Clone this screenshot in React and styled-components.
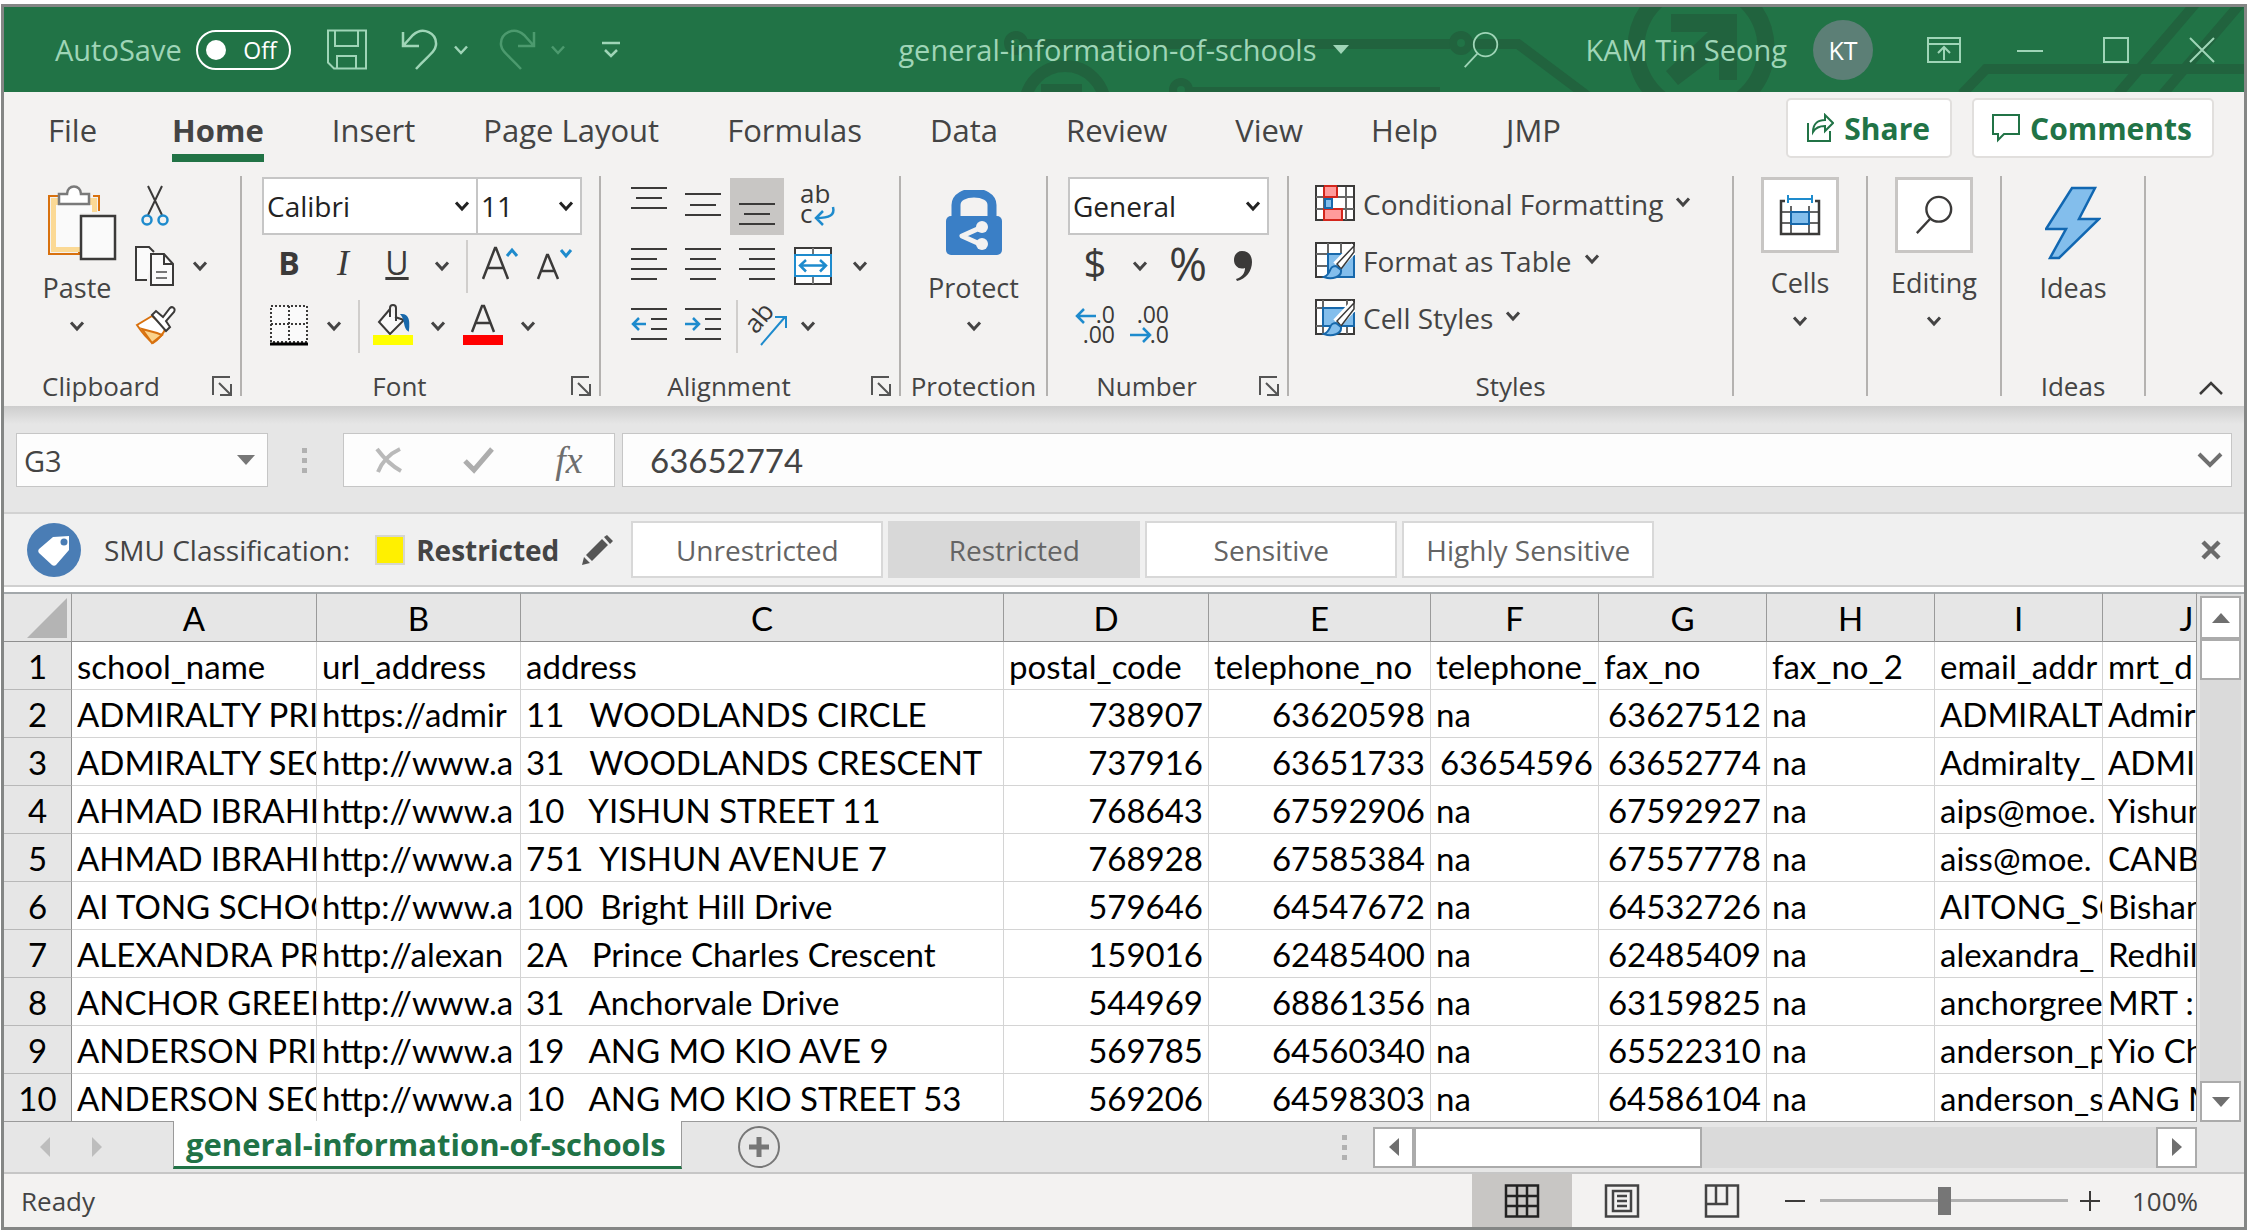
import React from "react";
import styled, { createGlobalStyle, css } from "styled-components";

const ui = `"Open Sans", "Noto Sans", sans-serif`;
const sheetFont = `Lato, "Open Sans", sans-serif`;
const green = "#217346";
const mint = "#9fd5b7";
const ink = "#3b3a39";
const blue = "#1e8bcd";

const Global = createGlobalStyle`
  * { box-sizing: border-box; }
  body { margin: 0; background: #fff; font-family: ${ui}; color: #444; }
  button, input, select { font: inherit; color: inherit; margin: 0; }
`;

const Window = styled.div`
  margin: 4px 3px 3px 1px;
  border: 3px solid #848685;
  background: #f3f2f1;
  overflow: hidden;
`;

const Plain = styled.button`
  display: flex;
  align-items: center;
  justify-content: center;
  flex: none;
  border: 0;
  padding: 0;
  background: none;
`;

/* ---------- Title bar ---------- */
const TitleBar = styled.header`
  position: relative;
  display: flex;
  align-items: center;
  height: 85px;
  padding: 0 28px 0 51px;
  background: ${green};
  color: ${mint};
  font-size: 29px;
  line-height: 40px;
  white-space: nowrap;
`;
const Circuit = styled.svg`
  position: absolute;
  top: 0;
  right: 0;
`;
const Cluster = styled.div`
  position: relative;
  display: flex;
  align-items: center;
  gap: ${(p) => p.$gap || 0}px;
  margin-left: ${(p) => p.$left || 0};
`;
const AutoSave = styled.label`
  display: flex;
  align-items: center;
  gap: 14px;
  margin-right: 35px;
`;
const Toggle = styled.button`
  display: flex;
  align-items: center;
  justify-content: space-between;
  width: 95px;
  height: 40px;
  padding: 0 12px 0 8px;
  border: 2px solid #fff;
  border-radius: 20px;
  background: none;
  color: #fff;
  font-size: 23px;
  line-height: 30px;
`;
const Knob = styled.span`
  width: 20px;
  height: 20px;
  border-radius: 50%;
  background: #fff;
`;
const TitleName = styled(Plain)`
  gap: 16px;
`;
const Avatar = styled(Plain)`
  width: 60px;
  height: 60px;
  border-radius: 50%;
  background: #5c7f76;
  color: #fff;
  font-size: 25px;
  margin: 0 54px 0 26px;
`;
const QuickButton = styled(Plain)`
  margin-right: ${(p) => p.$after || 0}px;
`;

/* ---------- Tabs ---------- */
const TabRow = styled.nav`
  display: flex;
  align-items: center;
  height: 72px;
  padding: 0 30px 0 44px;
  font-size: 31px;
`;
const Tab = styled.button`
  height: 72px;
  border: 0;
  padding: 4px 0 0;
  margin-right: ${(p) => (p.$first ? 75 : 68)}px;
  background: ${(p) => (p.$active ? `linear-gradient(${green}, ${green}) 0 62px / 100% 8px no-repeat` : "none")};
  font-weight: ${(p) => (p.$active ? 700 : 400)};
  line-height: 68px;
  white-space: nowrap;
`;
const TabActions = styled.div`
  display: flex;
  gap: 20px;
  margin-left: auto;
`;
const ActionButton = styled.button`
  display: flex;
  align-items: center;
  gap: 10px;
  height: 60px;
  padding: 0 20px 0 18px;
  border: 2px solid #e1dfdd;
  border-radius: 5px;
  background: #fff;
  color: ${green};
  font-weight: 700;
  font-size: 30px;
`;

/* ---------- Ribbon ---------- */
const Ribbon = styled.section`
  display: flex;
  height: 242px;
  padding: 12px 0 10px;
  font-size: 27px;
`;
const Group = styled.div`
  display: flex;
  flex-direction: column;
  flex: none;
  width: ${(p) => p.$w}px;
  padding: 1px 0 0 ${(p) => p.$pad || 0}px;
  border-right: 2px solid #b4b2b0;
`;
const GroupFoot = styled.div`
  display: flex;
  align-items: center;
  height: 20px;
  margin-top: auto;
  margin-left: -${(p) => p.$pad || 0}px;
  font-size: 26px;
  line-height: 20px;
`;
const GroupLabel = styled.span`
  flex: 1;
  text-align: center;
  white-space: nowrap;
`;
const Launcher = styled(Plain)`
  width: 42px;
  height: 20px;
  padding-left: 6px;
`;
const Rows = styled.div`
  display: flex;
  flex-direction: column;
  gap: 2px;
`;
const Row = styled.div`
  display: flex;
  align-items: center;
  height: 58px;
`;
const Tool = styled(Plain)`
  width: ${(p) => p.$w || 54}px;
  height: 57px;
  padding-bottom: ${(p) => (p.$raised ? 6 : 0)}px;
  font-size: ${(p) => p.$size || 32}px;
  line-height: 50px;
  color: ${ink};
  ${(p) => p.$on && css`background: #c8c6c4;`}
`;
const Bold = styled.b`
  font-weight: 700;
`;
const Italic = styled.i`
  font-family: "Liberation Serif", serif;
  font-size: 36px;
`;
const Rule = styled.span`
  flex: none;
  width: 2px;
  height: 53px;
  margin: 0 6px;
  background: #d0cecc;
`;
const Combo = styled.label`
  display: grid;
  flex: none;
  align-items: center;
  width: ${(p) => p.$w}px;
  height: 58px;
  border: 2px solid #c6c6c6;
  background: #fff;
  font-size: 28px;
  color: #222;
  & + & { margin-left: -2px; }
  > * { grid-area: 1 / 1; }
  > svg { justify-self: end; margin-right: 6px; pointer-events: none; }
`;
const ComboSelect = styled.select`
  appearance: none;
  width: 100%;
  height: 54px;
  border: 0;
  padding: 0 30px 0 3px;
  background: none;
`;
const Split = styled.div`
  display: flex;
  align-items: flex-start;
  gap: 6px;
`;
const Big = styled(Plain)`
  flex-direction: column;
  justify-content: flex-start;
  align-self: ${(p) => (p.$w ? "flex-start" : "center")};
  width: ${(p) => p.$w || "auto"};
  line-height: 38px;
`;
const BigIcon = styled.span`
  display: grid;
  place-items: center;
  height: 92px;
`;
const BoxIcon = styled.span`
  display: grid;
  place-items: center;
  width: 78px;
  height: 76px;
  margin-bottom: 11px;
  border: 3px solid #c8c6c4;
  background: #fff;
`;
const DownCell = styled.span`
  display: grid;
  place-items: center;
  height: 38px;
`;
const StyleButton = styled(Plain)`
  align-self: flex-start;
  gap: 8px;
  height: 57px;
  padding-bottom: 4px;
  font-size: 28px;
  white-space: nowrap;
  > :last-child { margin: 0 0 4px 4px; }
`;
const Collapse = styled(Plain)`
  align-self: flex-end;
  margin-left: auto;
  margin-right: 20px;
`;

/* ---------- Formula bar ---------- */
const FormulaBar = styled.section`
  display: flex;
  align-items: center;
  height: 108px;
  padding: 2px 12px 0;
  border-bottom: 2px solid #d2d2d2;
  background: linear-gradient(#cdcdcd, #e6e6e6 18px);
`;
const Field = styled.div`
  display: flex;
  align-items: center;
  width: ${(p) => p.$w || "auto"};
  flex: ${(p) => (p.$w ? "none" : 1)};
  height: 54px;
  margin-right: ${(p) => p.$after || 0}px;
  border: 1px solid #c6c6c6;
  background: #fdfdfd;
`;
const NameInput = styled.input`
  flex: 1;
  min-width: 0;
  border: 0;
  padding: 0 0 0 7px;
  background: none;
  font-size: 29px;
`;
const FormulaInput = styled(NameInput)`
  padding-left: 27px;
  font-family: ${sheetFont};
  font-size: 33px;
`;
const CaretButton = styled(Plain)`
  width: 42px;
  height: 52px;
`;
const Dots = styled.span`
  flex: none;
  width: 5px;
  height: 25px;
  margin: ${(p) => p.$margin};
  background: repeating-linear-gradient(#b1b1b1 0 5px, transparent 5px 10px);
`;
const FxButton = styled(Plain)`
  flex: 1;
  font-family: "Liberation Serif", serif;
  font-style: italic;
  font-size: 38px;
  color: #6e6e6e;
`;

/* ---------- Classification bar ---------- */
const ClassBar = styled.section`
  display: flex;
  align-items: center;
  height: 73px;
  padding: 0 22px 0 23px;
  border-bottom: 2px solid #d0d0d0;
  background: #f0f0f0;
  font-size: 28px;
  white-space: nowrap;
`;
const ClassText = styled.span`
  margin: 0 25px 0 23px;
`;
const Swatch = styled.span`
  width: 30px;
  height: 30px;
  border: 2px solid #d6d6cf;
  background: #fff000;
`;
const ClassName = styled.strong`
  margin: 0 22px 0 11px;
`;
const ClassOptions = styled.div`
  display: flex;
  gap: 5px;
  margin-left: 18px;
`;
const ClassButton = styled.button`
  width: 252px;
  height: 57px;
  padding: 0;
  border: 2px solid #d8d8d8;
  background: ${(p) => (p.$on ? "#d8d8d8" : "#fff")};
  color: #646464;
`;
const CloseButton = styled(Plain)`
  margin-left: auto;
`;

/* ---------- Grid ---------- */
const GridArea = styled.main`
  display: flex;
  padding-top: 5px;
  background: #fff;
`;
const GridView = styled.div`
  flex: 1;
  min-width: 0;
  overflow: hidden;
  height: 530px;
  border-right: 1px solid #9a9a9a;
  border-bottom: 1px solid #9a9a9a;
`;
const Sheet = styled.table`
  table-layout: fixed;
  width: 2267px;
  border-collapse: separate;
  border-spacing: 0;
  font-family: ${sheetFont};
  font-size: 33px;
  color: #000;
`;
const Col = styled.col`
  width: ${(p) => p.$w}px;
`;
const ColHead = styled.th`
  height: 50px;
  padding: 0;
  border-top: 2px solid #a3a8ab;
  border-right: 1px solid #9a9a9a;
  border-bottom: 1px solid #8f8f8f;
  background: #e6e6e6;
  font-weight: 400;
  line-height: 40px;
`;
const RowHead = styled.th`
  height: 48px;
  padding: 0;
  border-right: 1px solid #8f8f8f;
  border-bottom: 1px solid #b8b8b8;
  background: #e6e6e6;
  font-weight: 400;
  line-height: 40px;
`;
const Cell = styled.td`
  height: 48px;
  padding: 0 5px;
  border-right: 1px solid #d4d4d4;
  border-bottom: 1px solid #d4d4d4;
  overflow: hidden;
  white-space: pre;
  line-height: 40px;
  text-align: ${(p) => (p.$num ? "right" : "left")};
`;
const Corner = styled.svg`
  display: block;
  margin-left: auto;
  margin-right: 4px;
`;
const VScroll = styled.div`
  display: flex;
  flex-direction: column;
  flex: none;
  width: 47px;
  padding: 2px 3px 0;
  border-top: 2px solid #a3a8ab;
  background: linear-gradient(90deg, #e6e6e6 3px, #dadada 3px 44px, #e6e6e6 44px);
`;
const ScrollButton = styled(Plain)`
  width: 41px;
  height: ${(p) => p.$h || 41}px;
  border: 2px solid #ababab;
  background: #fff;
  ${(p) => p.$last && css`margin-${p.$last}: auto;`}
`;
const Thumb = styled.div`
  flex: none;
  width: ${(p) => p.$w || 41}px;
  height: 41px;
  border: 2px solid #ababab;
  background: #fff;
`;

/* ---------- Sheet tabs ---------- */
const SheetBar = styled.section`
  display: flex;
  height: 50px;
  padding-right: 47px;
  background: #e6e6e6;
`;
const SheetNav = styled.div`
  display: flex;
  align-items: center;
  gap: 42px;
  width: 169px;
  padding-left: 36px;
`;
const SheetTab = styled.button`
  height: 48px;
  margin-top: -1px;
  padding: 0 15px 0 12px;
  border: solid #9a9a9a;
  border-width: 0 1px;
  border-bottom: 3px solid ${green};
  background: #fff;
  color: ${green};
  font-weight: 700;
  font-size: 31px;
  line-height: 40px;
`;
const AddSheet = styled(Plain)`
  margin-left: 56px;
`;
const HScroll = styled.div`
  display: flex;
  align-self: center;
  width: 824px;
  height: 41px;
  background: #dadada;
`;

/* ---------- Status bar ---------- */
const StatusBar = styled.footer`
  display: flex;
  align-items: center;
  height: 55px;
  padding-right: 46px;
  border-top: 2px solid #c6c6c6;
  background: #f3f2f1;
  font-size: 26px;
`;
const Ready = styled.span`
  flex: 1;
  padding-left: 17px;
`;
const ViewButton = styled(Plain)`
  width: 100px;
  height: 53px;
  background: ${(p) => (p.$on ? "#c8c6c4" : "none")};
`;
const ZoomSlider = styled.input`
  appearance: none;
  width: 248px;
  height: 28px;
  margin: 0 12px;
  background: linear-gradient(#b1b1b1, #b1b1b1) center / 100% 3px no-repeat;
  &::-webkit-slider-thumb {
    appearance: none;
    width: 13px;
    height: 28px;
    background: #767676;
  }
`;
const ZoomLevel = styled.output`
  width: 98px;
  text-align: right;
`;

/* ---------- Icons ---------- */
const Svg = ({ w, h, children, sw = 2, stroke = ink, vb }) => (
  <svg width={w} height={h} viewBox={vb || `0 0 ${w} ${h}`} fill="none" stroke={stroke} strokeWidth={sw} aria-hidden="true">
    {children}
  </svg>
);
const Down = ({ color = "#444", sw = 3 }) => (
  <Svg w={16} h={12} stroke={color} sw={sw}><path d="M2 2.5l6 6.5 6-6.5" /></Svg>
);
const triangles = { down: "M1 5h18l-9 10z", up: "M1 15h18L10 5z", left: "M15 1v18L5 10z", right: "M5 1v18l10-9z" };
const Tri = ({ dir = "down", color = "#6f6f6f" }) => (
  <Svg w={20} h={20} stroke="none"><path d={triangles[dir]} fill={color} /></Svg>
);
const LaunchIcon = () => (
  <Svg w={20} h={20} stroke="#555"><path d="M1 19V1h17M7 7l11 11M19 8v11H8" /></Svg>
);
const Lines = ({ rows, children }) => (
  <Svg w={36} h={42}>
    {rows.map(([x, y, len]) => <path key={y} d={`M${x} ${y}h${len}`} />)}
    {children}
  </Svg>
);
const PasteIcon = () => (
  <Svg w={80} h={76} vb="-10 0 80 76">
    <path d="M12 11H2v58h30v-8M46 11h6v15" stroke="#d8710e" />
    <path d="M4 13h8v8h30v-8h8v14H33v40H4z" fill="#fbd995" stroke="none" />
    <path d="M9 20h36v8H33v34H9z" fill="#fafafa" stroke="none" />
    <path d="M12 9h8c0-10 14-10 14 0h8v10H12z" fill="#fff" stroke="#7a7a7a" strokeWidth="2.5" />
    <rect x="34" y="31" width="34" height="43" fill="#fafafa" strokeWidth="2.5" />
  </Svg>
);
const CutIcon = () => (
  <Svg w={28} h={42}>
    <path d="M7 1l14 29M21 1L7 30" />
    <circle cx="6" cy="35" r="4.5" stroke={blue} strokeWidth="2.5" />
    <circle cx="22" cy="35" r="4.5" stroke={blue} strokeWidth="2.5" />
  </Svg>
);
const CopyIcon = () => (
  <Svg w={42} h={42}>
    <path d="M13 35H2V2h13l5 5" fill="#fafafa" />
    <path d="M17 9h13l9 10v21H17z" fill="#fafafa" />
    <path d="M30 9v10h9" />
    <path d="M22 27h11M22 33h11" stroke="#777" />
  </Svg>
);
const BrushIcon = () => (
  <Svg w={42} h={44}>
    <path d="M18 12L3 21c4 6 9 13 16 18 6-4 10-9 13-15z" fill="#fff" stroke="#d8710e" />
    <path d="M8 25l15 4 5 2-10 8z" fill="#fbd38b" stroke="#d8710e" />
    <path d="M18 11l4-4 7 6 7-9c2-2 6 0 4 4l-8 9 4 6-4 4z" fill="#fff" />
  </Svg>
);
const BorderIcon = () => (
  <Svg w={40} h={44}>
    <rect x="2" y="2" width="36" height="36" fill="#fafafa" strokeDasharray="2 2" />
    <path d="M20 2v36M2 20h36" strokeDasharray="2 2" />
    <path d="M1 40h38" stroke="#000" strokeWidth="3" />
  </Svg>
);
const FillIcon = () => (
  <Svg w={42} h={44}>
    <path d="M18 5L7 18l11 12 14-14-9-3" fill="#fafafa" />
    <path d="M18 13V4c0-4 6-4 6 0v13" />
    <path d="M30 11c6 0 7 6 6 15-4-3-2-10-6-15z" fill="#1768ab" stroke="#1768ab" />
    <path d="M1 36h40" stroke="#ffff00" strokeWidth="10" />
  </Svg>
);
const FontColorIcon = () => (
  <Svg w={42} h={44}>
    <path d="M10 28L20 2h2l10 26M14 19h14" strokeWidth="2.5" />
    <path d="M1 36h40" stroke="#ff0000" strokeWidth="10" />
  </Svg>
);
const SizeIcon = ({ up }) => (
  <Svg w={38} h={36}>
    {up ? <path d="M1 34L13 3h1l12 31M6 23h15" strokeWidth="2.5" /> : <path d="M2 34L11 10h1l10 24M6 26h12" strokeWidth="2.5" />}
    <path d={up ? "M25 11l5-6 5 6" : "M25 5l5 6 5-6"} stroke={blue} strokeWidth="3" />
  </Svg>
);
const svgText = { fontFamily: ui, fill: ink, stroke: "none" };
const WrapIcon = () => (
  <Svg w={36} h={42}>
    <text x="0" y="18" fontSize="26" {...svgText}>ab</text>
    <text x="0" y="38" fontSize="26" {...svgText}>c</text>
    <path d="M33 22c2 8-3 11-17 11M23 26l-7 7 7 7" stroke={blue} strokeWidth="2.5" />
  </Svg>
);
const MergeIcon = () => (
  <Svg w={40} h={40}>
    <rect x="2" y="2" width="36" height="36" fill="#fff" />
    <path d="M20 2v7M20 31v7" stroke="#777" />
    <rect x="2" y="9" width="36" height="21" stroke={blue} fill="#fff" />
    <path d="M8 19.500h24M13 14l-6 5.500 6 6M27 14l6 5.500-6 6" stroke={blue} strokeWidth="2.500" />
  </Svg>
);
const OrientIcon = () => (
  <Svg w={42} h={42}>
    <text x="10" y="30" fontSize="26" transform="rotate(-50 10 30)" {...svgText}>ab</text>
    <path d="M15 40L39 12M29 12h11v11" stroke={blue} />
  </Svg>
);
const LockIcon = () => (
  <Svg w={56} h={66}>
    <path d="M10 28V15c0-16 36-16 36 0v13" stroke="#3a7fc6" strokeWidth="9" />
    <rect x="0" y="26" width="56" height="39" rx="5" fill="#3a7fc6" stroke="none" />
    <path d="M36 37L16 46l20 9" stroke="#f3f2f1" strokeWidth="5" strokeLinejoin="round" />
    <circle cx="36" cy="37" r="6" fill="#f3f2f1" stroke="none" />
    <circle cx="36" cy="54" r="6" fill="#f3f2f1" stroke="none" />
  </Svg>
);
const CommaIcon = () => (
  <Svg w={20} h={34} stroke="none">
    <path d="M9 2c6 0 10 4 10 11 0 9-6 17-15 19l-1-2c6-2 9-6 9-11-6 2-11-2-11-8 0-5 3-9 8-9z" fill={ink} />
  </Svg>
);
const DecimalIcon = ({ less }) => (
  <Svg w={40} h={42}>
    <text x="40" y="18" textAnchor="end" fontSize="23" {...svgText}>{less ? ".00" : ".0"}</text>
    <text x="40" y="38" textAnchor="end" fontSize="23" {...svgText}>{less ? ".0" : ".00"}</text>
    {less
      ? <path d="M1 30h20M14 23l7 7-7 7" stroke={blue} strokeWidth="2.500" />
      : <path d="M21 11H2M9 4l-7 7 7 7" stroke={blue} strokeWidth="2.500" />}
  </Svg>
);
const CondIcon = () => (
  <Svg w={40} h={38}>
    <rect x="1" y="1" width="38" height="34" fill="#fff" />
    <path d="M1 12h38M1 24h38M9 1v34M31 1v34" stroke="#666" />
    <path d="M9 1h13v11H9zM9 24h18v11H9z" fill="#ff9b9b" stroke="#d3261c" />
    <path d="M10 14h7v9h-7z" fill="#83beec" stroke="#1768ab" />
    <rect x="1" y="1" width="38" height="34" strokeDasharray="8 13 35 200" strokeWidth="2" />
  </Svg>
);
const BrushOver = () => (
  <>
    <path d="M40 5L22 24" stroke="#fff" strokeWidth="10" />
    <path d="M39 4L22 22l4 5L39 10z" fill="#fff" strokeWidth="1.500" />
    <path d="M21 24c-8 0-4 8-12 11 8 3 18 0 17-7z" fill="#83beec" stroke="#1768ab" />
  </>
);
const TableIcon = () => (
  <Svg w={40} h={38}>
    <rect x="1" y="1" width="38" height="34" fill="#fff" />
    <path d="M1 12h38M1 24h38M13 1v34M26 1v34" stroke="#666" />
    <path d="M13 12h26v23H13z" fill="#83beec" stroke="#1768ab" />
    <BrushOver />
  </Svg>
);
const CellStyleIcon = () => (
  <Svg w={40} h={38}>
    <rect x="1" y="1" width="38" height="34" fill="#fff" />
    <path d="M1 9h38M1 27h38M8 1v34M32 1v34" stroke="#666" />
    <path d="M8 9h31v18H8z" fill="#83beec" stroke="#1768ab" />
    <BrushOver />
  </Svg>
);
const CellsIcon = () => (
  <Svg w={42} h={42}>
    <path d="M2 18h38M2 29h38M12 12v28M30 12v28" stroke="#666" />
    <path d="M6 7H2v33h38V7h-4" strokeWidth="2.500" />
    <rect x="12" y="18" width="18" height="12" fill="#83beec" stroke="#1768ab" />
    <path d="M9 1v8M33 1v8M9 5h24" stroke={blue} />
  </Svg>
);
const GlassIcon = ({ color = ink, sw = 2.5, w = 40 }) => (
  <Svg w={w} h={w} vb="0 0 40 42" stroke={color} sw={sw}>
    <circle cx="25" cy="15" r="13" /><path d="M16 25L2 40" />
  </Svg>
);
const BoltIcon = () => (
  <Svg w={56} h={74}>
    <path d="M27 2h23L34 33h20L14 72H5l16-29H1z" fill="#83beec" stroke="#1167b1" strokeWidth="2.500" />
  </Svg>
);
const PageIcon = ({ kind }) => (
  <Svg w={36} h={34} stroke="#444" sw={2.500}>
    {kind === "normal" && <path d="M2 1.500h32v31H2zM2 12h32M2 22h32M13 1v32M23 1v32" stroke="#222" />}
    {kind === "layout" && <path d="M2 1.500h32v31H2zM9 7h18v20H9zM13 12h10M13 17h10M13 22h10" />}
    {kind === "break" && <path d="M2 1.500h32v31H2zM2 20h21V1M12 1v19" />}
  </Svg>
);

/* ---------- Data ---------- */
const columns = [
  ["A", 245], ["B", 204], ["C", 483], ["D", 205], ["E", 222],
  ["F", 168], ["G", 168], ["H", 168], ["I", 168], ["J", 168],
];
const rows = [
  ["school_name", "url_address", "address", "postal_code", "telephone_no", "telephone_", "fax_no", "fax_no_2", "email_addr", "mrt_d"],
  ["ADMIRALTY PRI", "https://admir", "11   WOODLANDS CIRCLE", 738907, 63620598, "na", 63627512, "na", "ADMIRALTY", "Admira"],
  ["ADMIRALTY SEC", "http://www.a", "31   WOODLANDS CRESCENT", 737916, 63651733, 63654596, 63652774, "na", "Admiralty_", "ADMI"],
  ["AHMAD IBRAHIM", "http://www.a", "10   YISHUN STREET 11", 768643, 67592906, "na", 67592927, "na", "aips@moe.", "Yishun"],
  ["AHMAD IBRAHIM", "http://www.a", "751  YISHUN AVENUE 7", 768928, 67585384, "na", 67557778, "na", "aiss@moe.", "CANB"],
  ["AI TONG SCHOOL", "http://www.a", "100  Bright Hill Drive", 579646, 64547672, "na", 64532726, "na", "AITONG_SC", "Bishan"],
  ["ALEXANDRA PRI", "http://alexan", "2A   Prince Charles Crescent", 159016, 62485400, "na", 62485409, "na", "alexandra_", "Redhill"],
  ["ANCHOR GREEN", "http://www.a", "31   Anchorvale Drive", 544969, 68861356, "na", 63159825, "na", "anchorgree", "MRT :"],
  ["ANDERSON PRIM", "http://www.a", "19   ANG MO KIO AVE 9", 569785, 64560340, "na", 65522310, "na", "anderson_p", "Yio Ch"],
  ["ANDERSON SECO", "http://www.a", "10   ANG MO KIO STREET 53", 569206, 64598303, "na", 64586104, "na", "anderson_s", "ANG M"],
];
const tabs = ["File", "Home", "Insert", "Page Layout", "Formulas", "Data", "Review", "View", "Help", "JMP"];
const levels = ["Unrestricted", "Restricted", "Sensitive", "Highly Sensitive"];

const Foot = ({ label, pad, launch }) => (
  <GroupFoot $pad={pad}>
    <GroupLabel>{label}</GroupLabel>
    {launch && <Launcher aria-label={`${label} settings`}><LaunchIcon /></Launcher>}
  </GroupFoot>
);
const More = ({ label }) => <Tool $w={36} aria-label={label}><Down /></Tool>;
const Choice = ({ label, w, value }) => (
  <Combo $w={w}>
    <ComboSelect aria-label={label} defaultValue={value}><option>{value}</option></ComboSelect>
    <Down color="#222" />
  </Combo>
);

const Title = () => (
  <TitleBar>
    <Circuit width="1260" height="85" viewBox="984 7 1260 85" fill="none" stroke="#21633e" strokeWidth="10" aria-hidden="true">
      <circle cx="1016" cy="43" r="8" strokeWidth="8" />
      <path d="M1026 44H1450M1472 44H1518L1590 98" />
      <circle cx="1461" cy="43" r="8" strokeWidth="8" />
      <circle cx="1065" cy="106" r="40" strokeWidth="12" />
      <path d="M1041 84h41v8h-41z" fill="#21633e" stroke="none" />
      <circle cx="1181" cy="90" r="8" strokeWidth="8" />
      <path d="M1190 92H1440" />
      <circle cx="1701" cy="48" r="65" strokeWidth="17" />
      <path d="M1671 14h66v66h-18V54l-41 31-12-14 42-39h-37z" fill="#21633e" stroke="none" />
      <path d="M1962 94L1986 69H2244M2195 4L2118 94M2240 4L2163 94" />
    </Circuit>
    <Cluster>
      <AutoSave>AutoSave
        <Toggle role="switch" aria-checked="false"><Knob />Off</Toggle>
      </AutoSave>
      <QuickButton $after={33} aria-label="Save">
        <Svg w={42} h={42} stroke={mint}><path d="M2 1.500h38v38H8l-6-6zM9 2v15h23V2M11 39V27h19v12" /></Svg>
      </QuickButton>
      <QuickButton $after={14} aria-label="Undo">
        <Svg w={38} h={42} stroke={mint} sw={2.500}><path d="M2 3v14h16M2 17L12 6C22-3 36 4 35 16c-1 7-7 10-20 24" /></Svg>
      </QuickButton>
      <QuickButton $after={29} aria-label="Undo list"><Down color={mint} sw={2.500} /></QuickButton>
      <QuickButton $after={14} aria-label="Redo">
        <Svg w={38} h={42} stroke="#4c9a6e" sw={2.500}><path d="M36 3v14H20M36 17L26 6C16-3 2 4 3 16c1 7 7 10 20 24" /></Svg>
      </QuickButton>
      <QuickButton $after={35} aria-label="Redo list"><Down color="#4c9a6e" sw={2.500} /></QuickButton>
      <QuickButton aria-label="Customize toolbar">
        <Svg w={20} h={18} stroke={mint} sw={2.500}><path d="M1 2h18M4 9l6 6 6-6" /></Svg>
      </QuickButton>
    </Cluster>
    <Cluster $left="auto" $gap={113}>
      <TitleName>general-information-of-schools
        <Svg w={16} h={10} stroke="none"><path d="M0 0h16L8 9z" fill={mint} /></Svg>
      </TitleName>
      <Plain aria-label="Search"><GlassIcon color={mint} sw={2} w={38} /></Plain>
    </Cluster>
    <Cluster $left="86px">
      <span>KAM Tin Seong</span>
      <Avatar>KT</Avatar>
      <QuickButton $after={55} aria-label="Ribbon display"><Svg w={34} h={28} stroke={mint}><path d="M1 2h32v24H1zM1 8h32M17 24V11M11 17l6-6 6 6" /></Svg></QuickButton>
      <QuickButton $after={58} aria-label="Minimize"><Svg w={28} h={28} stroke={mint}><path d="M1 15h26" /></Svg></QuickButton>
      <QuickButton $after={58} aria-label="Maximize"><Svg w={28} h={28} stroke={mint}><path d="M2 2h24v24H2z" /></Svg></QuickButton>
      <QuickButton aria-label="Close"><Svg w={28} h={28} stroke={mint}><path d="M2 2l24 24M26 2L2 26" /></Svg></QuickButton>
    </Cluster>
  </TitleBar>
);

const RibbonBar = () => (
  <Ribbon>
    <Group $w={238} $pad={28}>
      <Split>
        <Big $w="90px"><BigIcon><PasteIcon /></BigIcon>Paste<DownCell><Down /></DownCell></Big>
        <Rows>
          <Row><Tool aria-label="Cut"><CutIcon /></Tool></Row>
          <Row><Tool aria-label="Copy"><CopyIcon /></Tool><More label="Copy options" /></Row>
          <Row><Tool aria-label="Format painter"><BrushIcon /></Tool></Row>
        </Rows>
      </Split>
      <Foot label="Clipboard" pad={28} launch />
    </Group>
    <Group $w={359} $pad={20}>
      <Rows>
        <Row><Choice label="Font" w={216} value="Calibri" /><Choice label="Font size" w={106} value="11" /></Row>
        <Row>
          <Tool $raised aria-label="Bold"><Bold>B</Bold></Tool>
          <Tool $raised aria-label="Italic"><Italic>I</Italic></Tool>
          <Tool $raised aria-label="Underline"><u>U</u></Tool>
          <More label="Underline options" /><Rule />
          <Tool $raised aria-label="Increase font size"><SizeIcon up /></Tool>
          <Tool $raised aria-label="Decrease font size"><SizeIcon /></Tool>
        </Row>
        <Row>
          <Tool aria-label="Borders"><BorderIcon /></Tool><More label="Border options" /><Rule />
          <Tool aria-label="Fill color"><FillIcon /></Tool><More label="Fill options" />
          <Tool aria-label="Font color"><FontColorIcon /></Tool><More label="Font color options" />
        </Row>
      </Rows>
      <Foot label="Font" pad={20} launch />
    </Group>
    <Group $w={300} $pad={21}>
      <Rows>
        <Row>
          <Tool aria-label="Top align"><Lines rows={[[0, 3, 36], [5, 13, 26], [0, 23, 36]]} /></Tool>
          <Tool aria-label="Middle align"><Lines rows={[[0, 9, 36], [5, 20, 26], [0, 30, 36]]} /></Tool>
          <Tool $on aria-label="Bottom align"><Lines rows={[[0, 19, 36], [5, 29, 26], [0, 39, 36]]} /></Tool>
          <Tool $w={68} aria-label="Wrap text"><WrapIcon /></Tool>
        </Row>
        <Row>
          <Tool aria-label="Align left"><Lines rows={[[0, 4, 36], [0, 14, 26], [0, 24, 36], [0, 34, 26]]} /></Tool>
          <Tool aria-label="Center"><Lines rows={[[0, 4, 36], [5, 14, 26], [0, 24, 36], [5, 34, 26]]} /></Tool>
          <Tool aria-label="Align right"><Lines rows={[[0, 4, 36], [10, 14, 26], [0, 24, 36], [10, 34, 26]]} /></Tool>
          <Tool $w={58} aria-label="Merge"><MergeIcon /></Tool><More label="Merge options" />
        </Row>
        <Row>
          <Tool aria-label="Decrease indent"><Lines rows={[[0, 4, 36], [20, 14, 16], [20, 24, 16], [0, 34, 36]]}><path d="M15 19H2M8 13l-6 6 6 6" stroke={blue} strokeWidth="2.500" /></Lines></Tool>
          <Tool aria-label="Increase indent"><Lines rows={[[0, 4, 36], [20, 14, 16], [20, 24, 16], [0, 34, 36]]}><path d="M0 19h13M8 13l6 6-6 6" stroke={blue} strokeWidth="2.500" /></Lines></Tool>
          <Rule />
          <Tool $w={46} aria-label="Orientation"><OrientIcon /></Tool><More label="Orientation options" />
        </Row>
      </Rows>
      <Foot label="Alignment" pad={21} launch />
    </Group>
    <Group $w={147}>
      <Big><BigIcon><LockIcon /></BigIcon>Protect<DownCell><Down /></DownCell></Big>
      <Foot label="Protection" />
    </Group>
    <Group $w={241} $pad={20}>
      <Rows>
        <Row><Choice label="Number format" w={201} value="General" /></Row>
        <Row>
          <Tool $raised $size={40} aria-label="Currency">$</Tool><More label="Currency options" />
          <Tool $raised $w={60} $size={46} aria-label="Percent">%</Tool>
          <Tool $w={50} aria-label="Comma style"><CommaIcon /></Tool>
        </Row>
        <Row>
          <Tool aria-label="Increase decimal"><DecimalIcon /></Tool>
          <Tool aria-label="Decrease decimal"><DecimalIcon less /></Tool>
        </Row>
      </Rows>
      <Foot label="Number" pad={20} launch />
    </Group>
    <Group $w={445} $pad={26}>
      <StyleButton><CondIcon />Conditional Formatting <Down /></StyleButton>
      <StyleButton><TableIcon />Format as Table <Down /></StyleButton>
      <StyleButton><CellStyleIcon />Cell Styles <Down /></StyleButton>
      <Foot label="Styles" pad={26} />
    </Group>
    <Group $w={134}>
      <Big><BoxIcon><CellsIcon /></BoxIcon>Cells<DownCell><Down /></DownCell></Big>
    </Group>
    <Group $w={134}>
      <Big><BoxIcon><GlassIcon /></BoxIcon>Editing<DownCell><Down /></DownCell></Big>
    </Group>
    <Group $w={144}>
      <Big><BigIcon><BoltIcon /></BigIcon>Ideas</Big>
      <Foot label="Ideas" />
    </Group>
    <Collapse aria-label="Collapse ribbon"><Svg w={26} h={16} sw={2.500}><path d="M2 14L13 3l11 11" /></Svg></Collapse>
  </Ribbon>
);

const FormulaRow = () => (
  <FormulaBar>
    <Field $w="252px">
      <NameInput aria-label="Name box" defaultValue="G3" />
      <CaretButton aria-label="Name list"><Tri color="#777" /></CaretButton>
    </Field>
    <Dots $margin="0 36px 0 34px" />
    <Field $w="272px" $after={7}>
      <FxButton aria-label="Cancel"><Svg w={30} h={28} stroke="#b9b9b9" sw={4}><path d="M3 3c6 8 13 16 24 22M26 3C15 8 8 16 4 26" /></Svg></FxButton>
      <FxButton aria-label="Enter"><Svg w={32} h={28} stroke="#adadad" sw={5}><path d="M2 15l9 9L29 3" /></Svg></FxButton>
      <FxButton aria-label="Insert function">fx</FxButton>
    </Field>
    <Field>
      <FormulaInput aria-label="Formula" defaultValue="63652774" />
      <CaretButton aria-label="Expand formula bar"><Svg w={26} h={16} stroke="#6f6f6f" sw={4}><path d="M2 2l11 11L24 2" /></Svg></CaretButton>
    </Field>
  </FormulaBar>
);

const Classification = () => (
  <ClassBar>
    <Svg w={54} h={54} stroke="none">
      <circle cx="27" cy="27" r="27" fill="#4a7db5" />
      <path d="M26 14l16-1v14L29 42c-1 1-3 1-4 0L12 30c-1-1-1-3 0-4z" fill="#fff" />
      <circle cx="37" cy="19" r="3.500" fill="#4a7db5" />
    </Svg>
    <ClassText>SMU Classification:</ClassText>
    <Swatch />
    <ClassName>Restricted</ClassName>
    <Plain aria-label="Edit classification">
      <Svg w={32} h={32} stroke="none"><path d="M1 31l2-8 6 6zM5 21L21 5l6 6-16 16zM23 3l3-2 6 6-3 3z" fill="#555" /></Svg>
    </Plain>
    <ClassOptions>
      {levels.map((c) => <ClassButton key={c} $on={c === "Restricted"}>{c}</ClassButton>)}
    </ClassOptions>
    <CloseButton aria-label="Close bar"><Svg w={22} h={22} stroke="#6a6a6a" sw={4.500}><path d="M3 3l16 16M19 3L3 19" /></Svg></CloseButton>
  </ClassBar>
);

const Grid = () => (
  <GridArea>
    <GridView>
      <Sheet>
        <colgroup>
          <Col $w={68} />
          {columns.map(([n, w]) => <Col key={n} $w={w} />)}
        </colgroup>
        <thead>
          <tr>
            <ColHead aria-label="Select all">
              <Corner width="40" height="40" viewBox="0 0 40 40"><path d="M40 0v40H0z" fill="#b4b4b4" /></Corner>
            </ColHead>
            {columns.map(([n]) => <ColHead key={n} scope="col">{n}</ColHead>)}
          </tr>
        </thead>
        <tbody>
          {rows.map((r, i) => (
            <tr key={i}>
              <RowHead scope="row">{i + 1}</RowHead>
              {r.map((v, j) => <Cell key={j} $num={typeof v === "number"}>{v}</Cell>)}
            </tr>
          ))}
        </tbody>
      </Sheet>
    </GridView>
    <VScroll>
      <ScrollButton $h={43} aria-label="Scroll up"><Tri dir="up" /></ScrollButton>
      <Thumb />
      <ScrollButton $last="top" aria-label="Scroll down"><Tri /></ScrollButton>
    </VScroll>
  </GridArea>
);

const Sheets = () => (
  <SheetBar>
    <SheetNav>
      <Plain aria-label="Previous sheet"><Svg w={10} h={20} stroke="none"><path d="M10 0v20L0 10z" fill="#bdbdbd" /></Svg></Plain>
      <Plain aria-label="Next sheet"><Svg w={10} h={20} stroke="none"><path d="M0 0v20l10-10z" fill="#bdbdbd" /></Svg></Plain>
    </SheetNav>
    <SheetTab>general-information-of-schools</SheetTab>
    <AddSheet aria-label="New sheet">
      <Svg w={42} h={42} stroke="#777"><circle cx="21" cy="21" r="20" /><path d="M11 21h20M21 11v20" strokeWidth="5" /></Svg>
    </AddSheet>
    <Dots $margin="13px 26px 0 auto" />
    <HScroll>
      <ScrollButton aria-label="Scroll left"><Tri dir="left" /></ScrollButton>
      <Thumb $w={288} />
      <ScrollButton $last="left" aria-label="Scroll right"><Tri dir="right" /></ScrollButton>
    </HScroll>
  </SheetBar>
);

const Status = () => (
  <StatusBar>
    <Ready>Ready</Ready>
    <ViewButton $on aria-label="Normal view"><PageIcon kind="normal" /></ViewButton>
    <ViewButton aria-label="Page layout view"><PageIcon kind="layout" /></ViewButton>
    <ViewButton aria-label="Page break view"><PageIcon kind="break" /></ViewButton>
    <Plain aria-label="Zoom out"><Svg w={36} h={22}><path d="M13 11h20" /></Svg></Plain>
    <ZoomSlider type="range" aria-label="Zoom" min="10" max="190" defaultValue="100" />
    <Plain aria-label="Zoom in"><Svg w={20} h={22}><path d="M0 11h20M10 1v20" /></Svg></Plain>
    <ZoomLevel>100%</ZoomLevel>
  </StatusBar>
);

export default function App() {
  return (
    <Window>
      <Global />
      <Title />
      <TabRow>
        {tabs.map((t, i) => <Tab key={t} $first={i === 0} $active={t === "Home"}>{t}</Tab>)}
        <TabActions>
          <ActionButton>
            <Svg w={28} h={30} stroke={green}><path d="M2 10v18h22V18M7 19c0-9 6-12 12-12V2l8 8-8 8v-5c-5 0-9 1-12 6z" /></Svg>
            Share
          </ActionButton>
          <ActionButton>
            <Svg w={28} h={30} stroke={green}><path d="M1 2h26v19H12l-6 6v-6H1z" /></Svg>
            Comments
          </ActionButton>
        </TabActions>
      </TabRow>
      <RibbonBar />
      <FormulaRow />
      <Classification />
      <Grid />
      <Sheets />
      <Status />
    </Window>
  );
}
